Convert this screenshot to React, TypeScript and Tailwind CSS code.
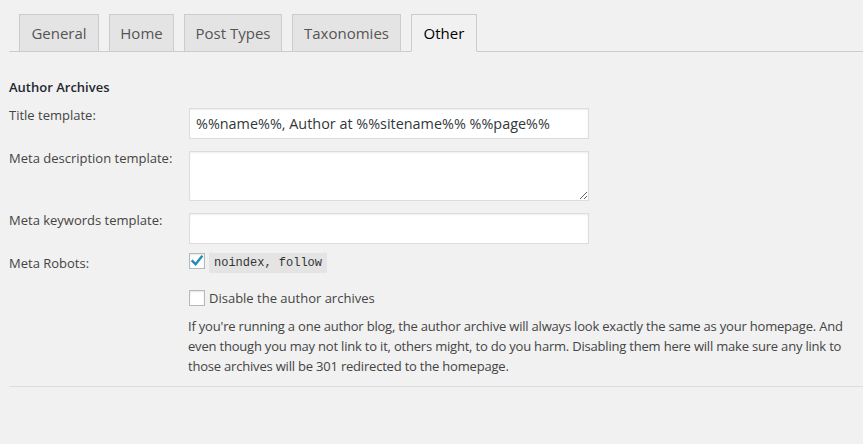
import React from "react";

const font = { fontFamily: '"Open Sans", "Noto Sans", sans-serif' };

function Tab({ label, active, w }: { label: string; active?: boolean; w: string }) {
  return (
    <div
      className={
        "h-[38px] border border-[#cccccc] flex items-center justify-center text-[15px] -mb-px " +
        w +
        " " +
        (active ? "bg-[#f1f1f1] border-b-[#f1f1f1] text-black" : "bg-[#e4e4e4] border-b-[#cccccc] text-[#555555]")
      }
    >
      {label}
    </div>
  );
}

function Checkbox({ checked }: { checked?: boolean }) {
  return (
    <div className="w-[16px] h-[16px] shrink-0 bg-white border border-[#b4b9be] shadow-[inset_0_1px_2px_rgba(0,0,0,0.1)] flex items-center justify-center">
      {checked && (
        <svg width="14" height="14" viewBox="0 0 14 14">
          <path d="M2.5 7.2 L5.6 10.2 L11.6 2.8" fill="none" stroke="#1e8cbe" strokeWidth="2.4" strokeLinecap="square" />
        </svg>
      )}
    </div>
  );
}

export default function App() {
  return (
    <div className="min-h-[444px] bg-[#f1f1f1] pl-[9px] text-[13px] text-[#444444]" style={font}>
      <div className="pt-[14px] border-b border-[#cccccc] flex gap-[10px] pl-[10px]">
        <Tab label="General" w="w-[80px]" />
        <Tab label="Home" w="w-[65px]" />
        <Tab label="Post Types" w="w-[98px]" />
        <Tab label="Taxonomies" w="w-[109px]" />
        <Tab label="Other" w="w-[66px]" active />
      </div>

      <div className="mt-[25px] leading-[20px] font-semibold text-[#23282d]">Author Archives</div>

      <div className="mt-[8px] flex items-start">
        <div className="w-[180px] leading-[20px]">Title template:</div>
        <input
          readOnly
          value="%%name%%, Author at %%sitename%% %%page%%"
          className="mt-[3px] w-[400px] h-[31px] bg-white border border-[#dddddd] shadow-[inset_0_1px_2px_rgba(0,0,0,0.07)] px-[6px] text-[14.4px] text-[#32373c] outline-none"
          style={font}
        />
      </div>

      <div className="mt-[9px] flex items-start">
        <div className="w-[180px] leading-[20px]">Meta description template:</div>
        <textarea
          readOnly
          className="mt-[3px] w-[400px] h-[50px] bg-white border border-[#dddddd] shadow-[inset_0_1px_2px_rgba(0,0,0,0.07)] px-[6px] text-[14px] outline-none block"
          style={font}
        />
      </div>

      <div className="mt-[9px] flex items-start">
        <div className="w-[180px] leading-[20px]">Meta keywords template:</div>
        <input
          readOnly
          className="mt-[3px] w-[400px] h-[31px] bg-white border border-[#dddddd] shadow-[inset_0_1px_2px_rgba(0,0,0,0.07)] px-[6px] text-[14px] outline-none"
          style={font}
        />
      </div>

      <div className="mt-[9px] flex items-start">
        <div className="w-[180px] leading-[20px]">Meta Robots:</div>
        <div className="flex items-start gap-[4px]">
          <Checkbox checked />
          <code
            className="h-[20px] bg-[#e4e4e4] px-[5px] text-[12px] leading-[20px] text-[#333333]"
            style={{ fontFamily: '"Liberation Mono", "DejaVu Sans Mono", monospace' }}
          >
            noindex, follow
          </code>
        </div>
      </div>

      <div className="mt-[15px] h-[20px] flex items-center pl-[180px] gap-[4px]">
        <Checkbox />
        <span className="leading-[20px]">Disable the author archives</span>
      </div>

      <p className="mt-[8px] pl-[179px] leading-[20px] tracking-[-0.2px]">
        If you're running a one author blog, the author archive will always look exactly the same as your homepage. And even though you may not link to it, others might, to do you harm. Disabling them here will make sure any link to those archives will be 301 redirected to the homepage.
      </p>

      <div className="mt-[10px] border-t border-[#dddddd]" />
    </div>
  );
}
